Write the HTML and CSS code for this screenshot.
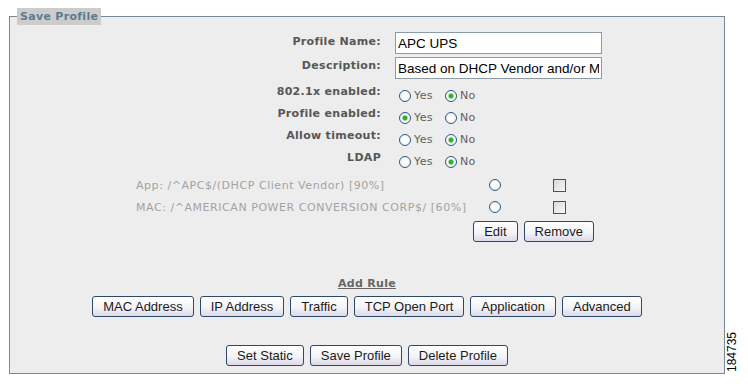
FILE: index.html
```html
<!DOCTYPE html>
<html lang="en">
<head>
    <meta charset="UTF-8">
    <title>Save Profile</title>
    <link rel="stylesheet" href="styles.css">
</head>
<body>
    <fieldset class="panel">
        <legend>Save Profile</legend>

        <div class="fields">
            <div class="field field-input first">
                <span class="field-label">Profile Name:</span>
                <input class="text-input" type="text" value="APC UPS">
            </div>
            <div class="field field-input second">
                <span class="field-label">Description:</span>
                <input class="text-input" type="text" value="Based on DHCP Vendor and/or MAC">
            </div>
            <div class="field field-choice">
                <span class="field-label">802.1x enabled:</span>
                <div class="choices">
                    <label class="choice"><input type="radio" name="dot1x">Yes</label>
                    <label class="choice"><input type="radio" name="dot1x" checked>No</label>
                </div>
            </div>
            <div class="field field-choice">
                <span class="field-label">Profile enabled:</span>
                <div class="choices">
                    <label class="choice"><input type="radio" name="enabled" checked>Yes</label>
                    <label class="choice"><input type="radio" name="enabled">No</label>
                </div>
            </div>
            <div class="field field-choice">
                <span class="field-label">Allow timeout:</span>
                <div class="choices">
                    <label class="choice"><input type="radio" name="timeout">Yes</label>
                    <label class="choice"><input type="radio" name="timeout" checked>No</label>
                </div>
            </div>
            <div class="field field-choice">
                <span class="field-label">LDAP</span>
                <div class="choices">
                    <label class="choice"><input type="radio" name="ldap">Yes</label>
                    <label class="choice"><input type="radio" name="ldap" checked>No</label>
                </div>
            </div>
        </div>

        <div class="rules">
            <div class="rule">
                <span class="rule-text">App: /^APC$/(DHCP Client Vendor) [90%]</span>
                <input type="radio" name="rule">
                <input type="checkbox">
            </div>
            <div class="rule">
                <span class="rule-text">MAC: /^AMERICAN POWER CONVERSION CORP$/ [60%]</span>
                <input type="radio" name="rule">
                <input type="checkbox">
            </div>
            <div class="rule-actions">
                <button class="xp-button">Edit</button>
                <button class="xp-button">Remove</button>
            </div>
        </div>

        <div class="add-rule">
            <span class="add-rule-title">Add Rule</span>
            <div class="button-row">
                <button class="xp-button">MAC Address</button>
                <button class="xp-button">IP Address</button>
                <button class="xp-button">Traffic</button>
                <button class="xp-button">TCP Open Port</button>
                <button class="xp-button">Application</button>
                <button class="xp-button">Advanced</button>
            </div>
        </div>

        <div class="button-row bottom-row">
            <button class="xp-button">Set Static</button>
            <button class="xp-button">Save Profile</button>
            <button class="xp-button">Delete Profile</button>
        </div>
    </fieldset>
    <div class="figure-id">184735</div>
</body>
</html>
```

FILE: styles.css
```css
body {
    margin: 0;
    padding-top: 8px;
    display: flex;
    align-items: flex-start;
    font-family: 'DejaVu Sans', Verdana, sans-serif;
    font-size: 11px;
    line-height: 13px;
    color: #555;
    background-color: #ffffff;
}

.panel {
    width: 716px;
    box-sizing: border-box;
    margin: 0 0 0 9px;
    padding: 0 0 7px 0;
    border: 1px solid #76889a;
    background-color: #ededed;
}

.panel legend {
    margin-left: 7px;
    padding: 0 3px;
    line-height: 17px;
    font-weight: bold;
    letter-spacing: 0.3px;
    color: #5e7b8c;
    background-color: #cccccc;
}

/* profile fields */
.fields {
    margin-top: 6px;
}

.field {
    display: flex;
    align-items: flex-start;
}

.field-label {
    width: 371px;
    margin-right: 14px;
    text-align: right;
    font-weight: bold;
    letter-spacing: 0.3px;
    color: #575757;
}

.field-input {
    height: 24px;
}

.field-input .field-label {
    padding-top: 4px;
}

.field-input.first .text-input {
    margin-top: 1px;
}

.field-input.second {
    height: 25px;
}

.field-input.second .text-input {
    margin-top: 2px;
}

.text-input {
    width: 207px;
    height: 22px;
    box-sizing: border-box;
    margin: 0;
    padding: 0 2px;
    border: 1px solid #8e9aa5;
    background-color: #ffffff;
    font-family: 'Liberation Sans', Arial, sans-serif;
    font-size: 13.5px;
    color: #000;
    outline: none;
}

.field-choice {
    height: 22px;
}

.field-choice .field-label {
    padding-top: 5px;
}

.choices {
    display: flex;
    align-items: center;
    padding-top: 9px;
    padding-left: 4px;
}

.choice {
    display: flex;
    align-items: center;
    margin-right: 12px;
    letter-spacing: 0.4px;
    color: #5f5f5f;
}

/* xp style radios and checkboxes */
input[type="radio"] {
    appearance: none;
    width: 12px;
    height: 12px;
    margin: 0 3px 0 0;
    border: 1px solid #2a5a85;
    border-radius: 50%;
    box-sizing: border-box;
    background: radial-gradient(circle, #ffffff 40%, #e2e2dc 100%);
}

input[type="radio"]:checked {
    background: radial-gradient(circle, #2fb12f 0, #2fb12f 2px, #a6dea6 2.6px, #ffffff 3.4px, #e2e2dc 100%);
}

input[type="checkbox"] {
    appearance: none;
    width: 13px;
    height: 13px;
    margin: 0;
    border: 1px solid #2a5a85;
    box-sizing: border-box;
    background: linear-gradient(135deg, #d5d9dc, #f7f7f7);
}

/* rules list */
.rules {
    width: 458px;
    margin: 6px 0 0 126px;
}

.rule {
    display: grid;
    grid-template-columns: 353px 64px 13px;
    align-items: center;
    height: 22px;
}

.rule-text {
    letter-spacing: 0.55px;
    color: #a3a3a3;
    white-space: nowrap;
}

.rule-actions {
    display: flex;
    justify-content: flex-end;
    gap: 6px;
    margin-top: 3px;
}

.xp-button {
    height: 21px;
    margin: 0;
    padding: 0 10px;
    border: 1px solid #2b4a6b;
    border-radius: 3px;
    background: linear-gradient(#ffffff, #f4f4f8 55%, #dcd9e8);
    font-family: 'Liberation Sans', Arial, sans-serif;
    font-size: 13px;
    color: #1a1a1a;
    cursor: pointer;
}

/* add rule */
.add-rule {
    margin-top: 35px;
    display: flex;
    flex-direction: column;
    align-items: center;
}

.add-rule-title {
    font-weight: bold;
    letter-spacing: 0.3px;
    text-decoration: underline;
    color: #666;
}

.button-row {
    display: flex;
    justify-content: center;
    gap: 6px;
    margin-top: 6px;
}

.bottom-row {
    margin-top: 28px;
}

.figure-id {
    align-self: flex-end;
    margin: 0 0 2px 2px;
    writing-mode: vertical-rl;
    transform: rotate(180deg);
    font-family: 'Liberation Sans', Arial, sans-serif;
    font-size: 12px;
    line-height: 10px;
    color: #000;
}
```
